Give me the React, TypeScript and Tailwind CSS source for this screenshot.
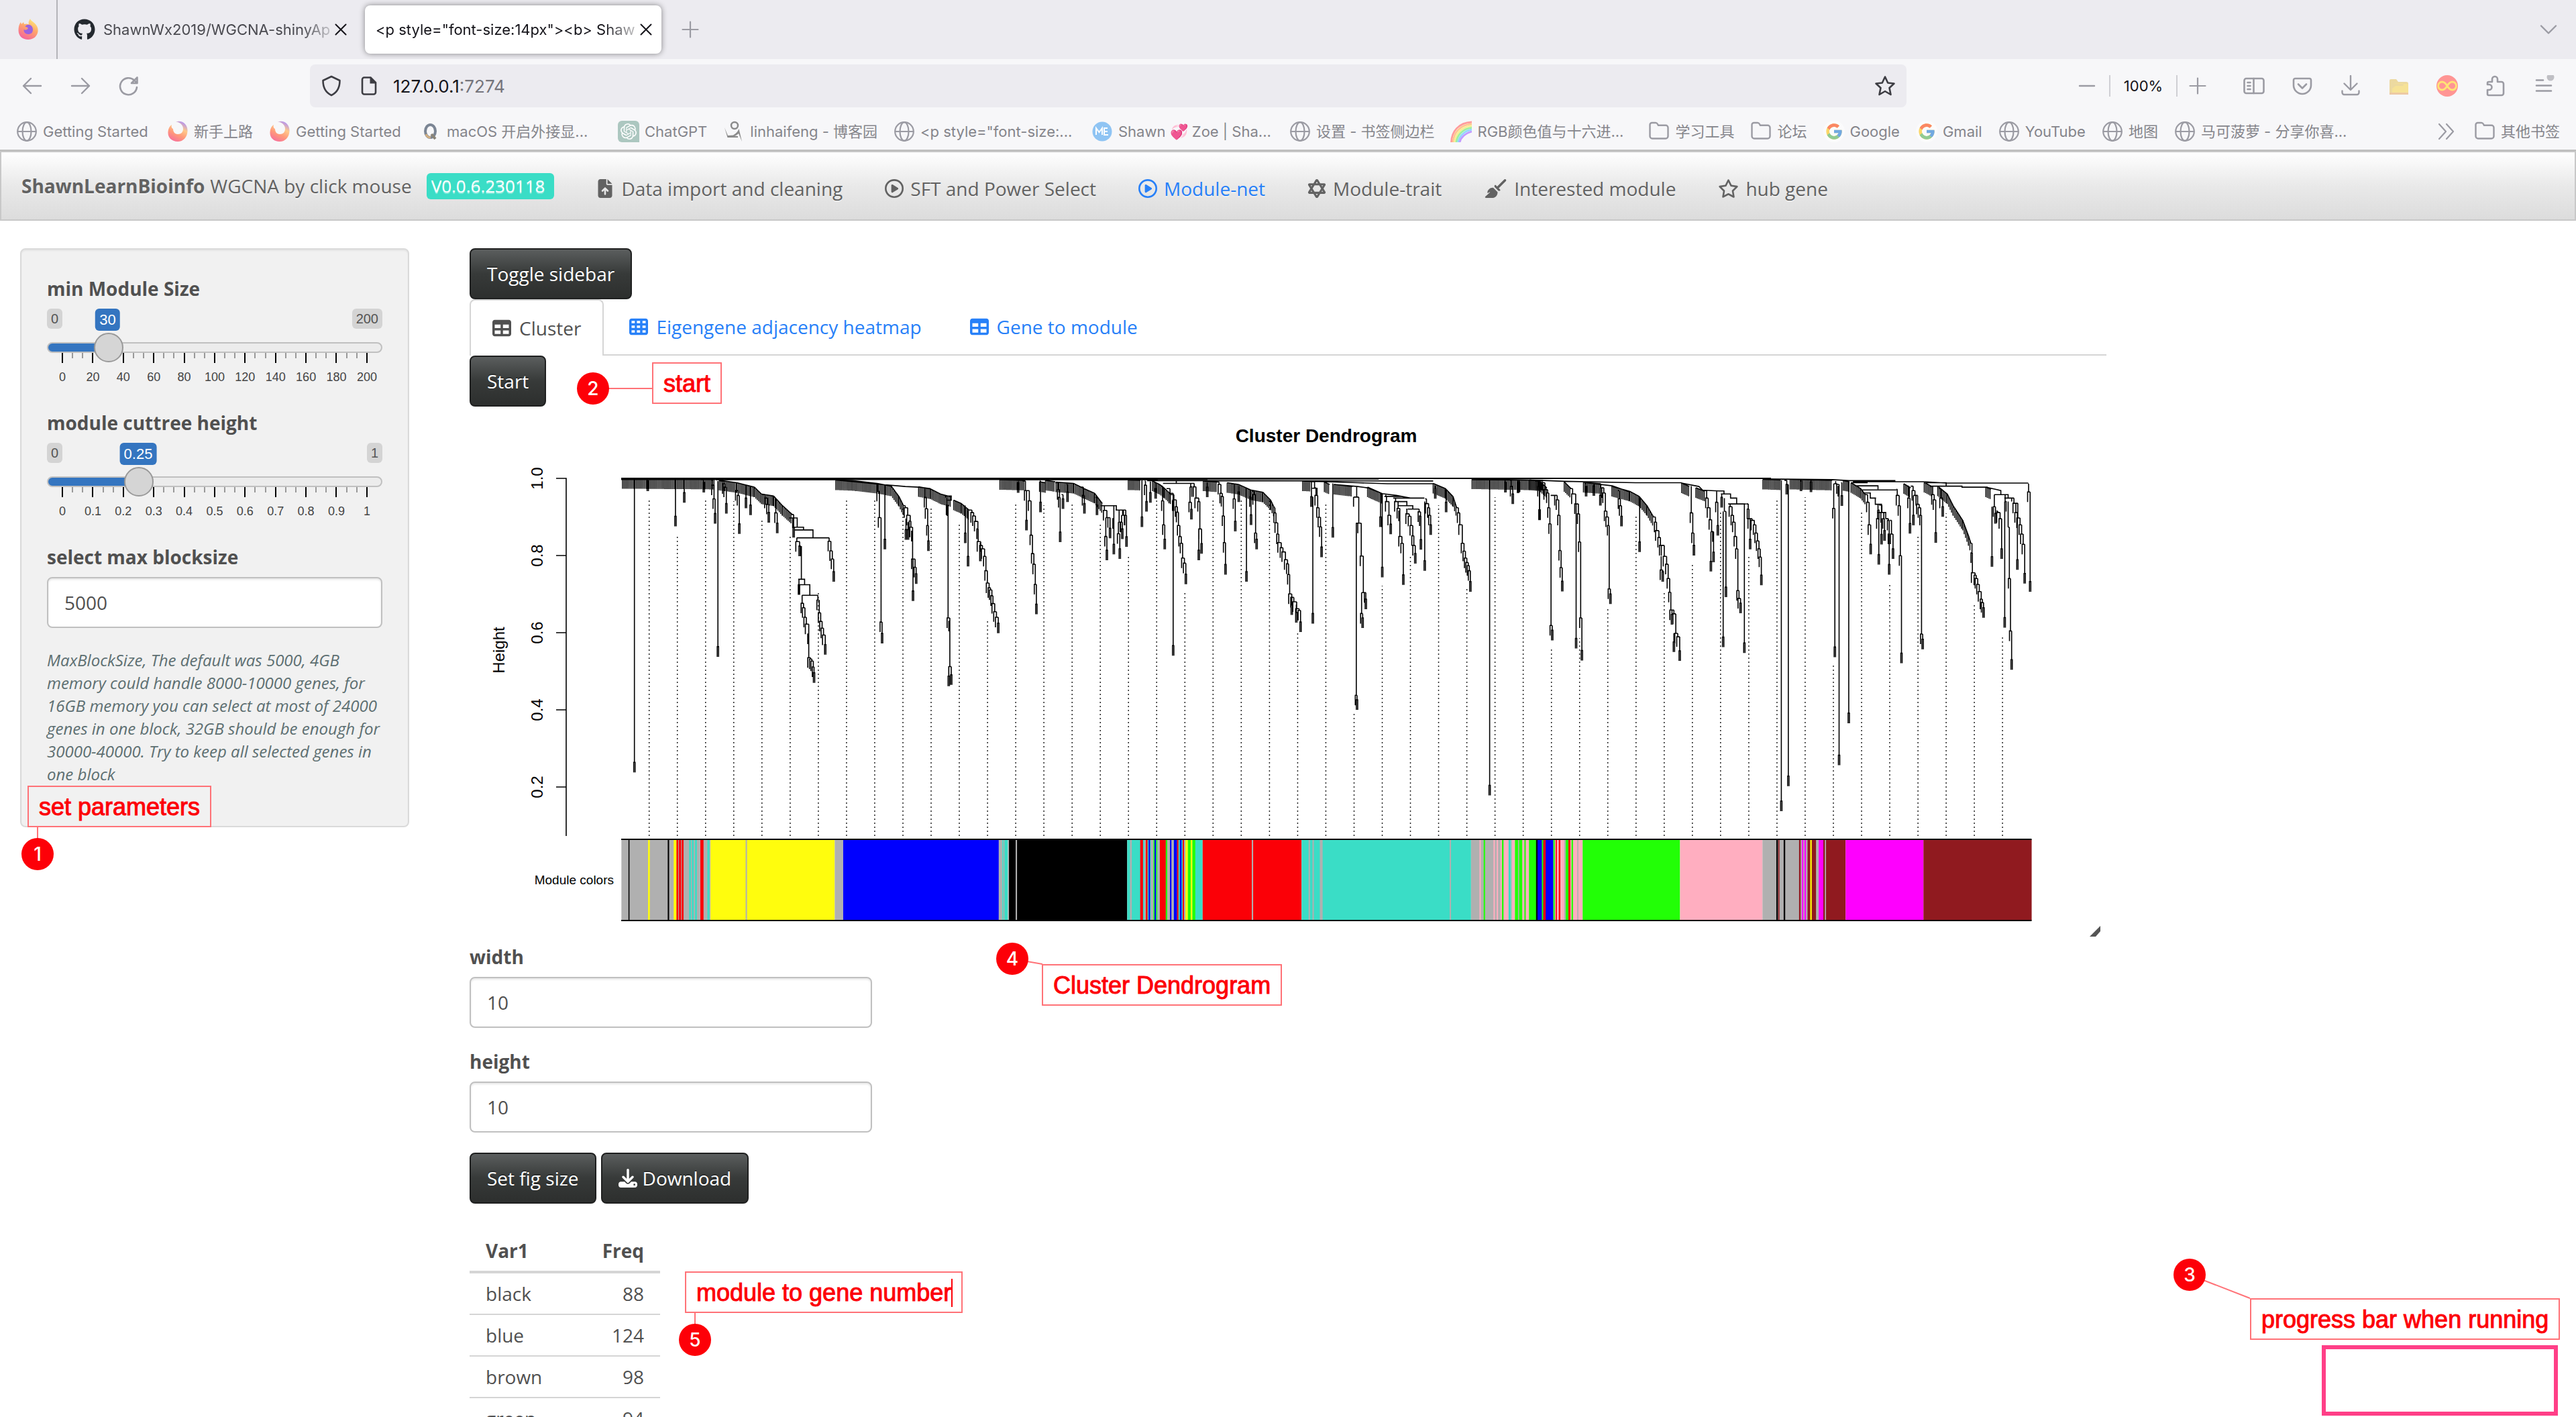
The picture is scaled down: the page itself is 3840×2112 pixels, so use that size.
import { useId, useState, type ReactNode } from "react";
import { FaBroom, FaDownload, FaFileArrowUp, FaGithub, FaRegCirclePlay, FaRegStar, FaStarOfDavid, FaTable, FaTableCells } from "react-icons/fa6";
import { FcGoogle } from "react-icons/fc";
import { SiOpenai } from "react-icons/si";

/* ---------- browser icons ---------- */

function Stroke({ d, className = "size-8", w = 2.4, children }: { d?: string; className?: string; w?: number; children?: ReactNode }) {
  return (
    <svg viewBox="0 0 32 32" className={`${className} shrink-0`} fill="none" stroke="currentColor" strokeWidth={w} strokeLinecap="round" strokeLinejoin="round" aria-hidden="true">
      {d && <path d={d} />}
      {children}
    </svg>
  );
}

const Globe = () => (
  <Stroke className="size-8 text-[#9b9ba3]" w={2.2}>
    <circle cx="16" cy="16" r="13.8" />
    <ellipse cx="16" cy="16" rx="6.5" ry="13.8" />
    <path d="M2.5 16h27" />
  </Stroke>
);

const Folder = () => (
  <Stroke className="size-8 text-[#9b9ba3]" w={2.4} d="M2.5 6a3 3 0 0 1 3-3h5.5c1.5 0 2.2.6 3 2l1 1.800H26a3.500 3.500 0 0 1 3.500 3.500V23a3.500 3.500 0 0 1-3.500 3.500H6A3.500 3.500 0 0 1 2.500 23z" />
);

function Swirl() {
  const id = useId();
  return (
    <svg viewBox="0 0 32 32" className="size-8 shrink-0" aria-hidden="true">
      <defs>
        <linearGradient id={id} x1="0.8" y1="0" x2="0.3" y2="1">
          <stop offset="0" stopColor="#a98bff" />
          <stop offset="0.35" stopColor="#ffc98a" />
          <stop offset="0.65" stopColor="#ff9a7a" />
          <stop offset="1" stopColor="#f7709a" />
        </linearGradient>
      </defs>
      <path fill={`url(#${id})`} d="M13 1.500c10-3 18 4 17.500 14C30 25 24 31 16 31 7 31 1 25 1.500 17 2 11 4 8 7 6c-1 3 0 5 2 6 0 5 3 8 7 8 5 0 8-3 8-8 0-6-5-10-11-10.500z" />
    </svg>
  );
}

function FirefoxLogo() {
  const id = useId();
  return (
    <svg viewBox="0 0 32 32" className="size-8" aria-hidden="true">
      <defs>
        <linearGradient id={id} x1="0.8" y1="0" x2="0.3" y2="1">
          <stop offset="0" stopColor="#fff07a" />
          <stop offset="0.45" stopColor="#ffa76a" />
          <stop offset="1" stopColor="#f5619c" />
        </linearGradient>
      </defs>
      <path fill={`url(#${id})`} d="M19 0c1 3 4 4 7 7 4 4 5 8 4.500 12C29.500 26 24 31 16 31S1.500 26 1.500 17c0-5 1-9 3.500-12l1 3 3-3 1 3c3-1 5-.5 7 .5-1-3 0-6 2-8.500z" />
      <path fill="#9a62e0" d="M15 9c4-1 8 2 8 7s-3 7-7 7-7-3-6.500-7c2 1 4 1 6-1 1-2-2-3-4-3 1-2 2-3 3.500-3z" />
    </svg>
  );
}

const QIcon = () => (
  <svg viewBox="0 0 32 32" className="size-8 shrink-0" fill="none" aria-hidden="true">
    <ellipse cx="15.500" cy="15.500" rx="7.500" ry="9.500" stroke="#7b8594" strokeWidth="4" />
    <path d="M17 20l6 7" stroke="#8a8478" strokeWidth="4" />
    <path d="M9 20c1 3 4 5 7 5" stroke="#d3b083" strokeWidth="3" />
  </svg>
);

const ChatIcon = () => (
  <span className="flex size-8 shrink-0 items-center justify-center rounded-[6px] rounded-br-none bg-[#acc7c0] text-white">
    <SiOpenai className="size-6" />
  </span>
);

const RunnerIcon = () => (
  <svg viewBox="0 0 32 32" className="size-8 shrink-0" aria-hidden="true">
    <circle cx="17" cy="7" r="5" fill="none" stroke="#8b8b8b" strokeWidth="2.500" />
    <path fill="#8b8b8b" d="M2 10l5 12 8-.5c5-3 7-6 8.500-9.500L28 31l-5-12c-2 2-4 3-6 3.500l5 .5v2H6.500z" />
  </svg>
);

const MeIcon = () => (
  <svg viewBox="0 0 32 32" className="size-8 shrink-0" aria-hidden="true">
    <circle cx="16" cy="16" r="14.500" fill="#8fc4f3" />
    <path d="M7 21V11l4.500 6 4.500-6v10M24 11h-5v10h6M19 16h5" fill="none" stroke="#fff" strokeWidth="2" />
  </svg>
);

const RainbowIcon = () => (
  <svg viewBox="0 0 32 32" className="size-8 shrink-0" fill="none" strokeWidth="2.800" aria-hidden="true">
    <path d="M1.500 32C2 16 12 3 32 2" stroke="#ff9c9c" />
    <path d="M4 32C5 18 14 6 32 4.800" stroke="#ffc68f" />
    <path d="M6.500 32C8 20 16 9 32 7.600" stroke="#f7ee93" />
    <path d="M9 32C10 22 18 12 32 10.400" stroke="#9df0a0" />
    <path d="M11.500 32C13 24 20 15 32 13.200" stroke="#93d6ff" />
    <path d="M14 32C15 26 22 18 32 16" stroke="#c29bff" />
  </svg>
);

const GIcon = () => (
  <span className="flex size-8 shrink-0 items-center justify-center rounded-full bg-white opacity-60">
    <FcGoogle className="size-7" />
  </span>
);

const bookmarks: { icon: ReactNode; text: string; width?: string }[] = [
  { icon: <Globe />, text: "Getting Started", width: "w-[161px]" },
  { icon: <Swirl />, text: "新手上路" },
  { icon: <Swirl />, text: "Getting Started", width: "w-[161px]" },
  { icon: <QIcon />, text: "macOS 开启外接显...", width: "w-[231px]" },
  { icon: <ChatIcon />, text: "ChatGPT" },
  { icon: <RunnerIcon />, text: "linhaifeng - 博客园" },
  { icon: <Globe />, text: '<p style="font-size:...', width: "w-[231px]" },
  { icon: <MeIcon />, text: "Shawn 💞 Zoe | Sha...", width: "w-[231px]" },
  { icon: <Globe />, text: "设置 - 书签侧边栏" },
  { icon: <RainbowIcon />, text: "RGB颜色值与十六进...", width: "w-[231px]" },
  { icon: <Folder />, text: "学习工具" },
  { icon: <Folder />, text: "论坛" },
  { icon: <GIcon />, text: "Google" },
  { icon: <GIcon />, text: "Gmail" },
  { icon: <Globe />, text: "YouTube" },
  { icon: <Globe />, text: "地图" },
  { icon: <Globe />, text: "马可菠萝 - 分享你喜..." },
];

function ToolButton({ label, children }: { label: string; children: ReactNode }) {
  return (
    <button type="button" aria-label={label} className="flex h-16 w-[72px] shrink-0 items-center justify-center">
      {children}
    </button>
  );
}

function BrowserChrome() {
  return (
    <header className="shrink-0 border-b-2 border-[#bdbdbd] bg-[#f7f7f9] font-['Inter','Noto_Sans_CJK_SC',sans-serif] text-[22px]">
      <div className="flex h-[88px] items-center bg-[#ecebf0]">
        <button type="button" aria-label="Firefox" className="flex h-full w-[86px] items-center justify-center border-r-2 border-[#b4b4b9]">
          <FirefoxLogo />
        </button>
        <div className="ml-2 flex h-[72px] w-[442px] items-center pr-[15px] pl-4">
          <FaGithub className="size-8 shrink-0 text-[#24292f]" />
          <span className="ml-3 whitespace-nowrap text-[#4a4a50] [mask-image:linear-gradient(to_right,black_88%,transparent_104%)]">ShawnWx2019/WGCNA-shinyAp</span>
          <button type="button" aria-label="Close tab" className="ml-auto text-[#15141a]">
            <Stroke className="size-8" w={2} d="M8.500 8.500l15 15M23.500 8.500l-15 15" />
          </button>
        </div>
        <div className="ml-2 flex h-[72px] w-[442px] items-center rounded-lg bg-white pr-4 pl-4 shadow-[0_0_8px_rgba(0,0,0,0.45)]">
          <span className="whitespace-nowrap text-[#15141a] [mask-image:linear-gradient(to_right,black_88%,transparent_104%)]">{'<p style="font-size:14px"><b> Shaw'}</span>
          <button type="button" aria-label="Close tab" className="ml-auto text-[#15141a]">
            <Stroke className="size-8" w={2} d="M8.500 8.500l15 15M23.500 8.500l-15 15" />
          </button>
        </div>
        <button type="button" aria-label="New tab" className="ml-[27px] text-[#9b9ba3]">
          <Stroke d="M16 4.500v23M4.500 16h23" w={2.200} />
        </button>
        <button type="button" aria-label="List all tabs" className="mr-[25px] ml-auto text-[#9b9ba3]">
          <Stroke d="M5 10.500l11 11 11-11" />
        </button>
      </div>

      <div className="flex h-20 items-center px-3 text-[#9b9ba3]">
        <ToolButton label="Back"><Stroke d="M29 16H3M14 5L3 16l11 11" /></ToolButton>
        <ToolButton label="Forward"><Stroke d="M3 16h26M18 5l11 11-11 11" /></ToolButton>
        <ToolButton label="Reload">
          <Stroke w={2.600} d="M28 18A12.500 12.500 0 1 1 24 7.500l2.500 2.500M28.500 3.500V12H20z" />
        </ToolButton>
        <div className="ml-[234px] flex h-16 flex-1 items-center rounded-lg bg-[#ecebf0] px-4 text-[#3d3d43]">
          <Stroke w={2.600} d="M16 2L3.500 8c0 11 4 18 12.500 22 8.500-4 12.500-11 12.500-22z" />
          <svg viewBox="0 0 32 32" className="ml-6 size-8 shrink-0" aria-hidden="true">
            <path d="M9 3.500h9.500L26 11v14.500a3 3 0 0 1-3 3H9a3 3 0 0 1-3-3v-19a3 3 0 0 1 3-3z" fill="none" stroke="currentColor" strokeWidth="2.600" />
            <path d="M17.500 3v9.500H27z" fill="currentColor" />
          </svg>
          <button type="button" className="ml-5 flex-1 pt-0.5 text-left text-[26px] text-[#15141a]">
            127.0.0.1<span className="text-[#75757c]">:7274</span>
          </button>
          <button type="button" aria-label="Bookmark this page">
            <Stroke w={2.600} d="M16 2.500l4.200 9 9.300 1-7 6.500 2 10L16 24l-8.500 5 2-10-7-6.500 9.300-1z" />
          </button>
        </div>
        <div className="ml-[236px] flex items-center">
          <button type="button" aria-label="Zoom out" className="flex w-[66px] justify-center"><Stroke d="M5 16h22" /></button>
          <span className="flex h-8 w-[102px] items-center justify-center border-x-2 border-[#cfcfd4] text-[#15141a]">100%</span>
          <button type="button" aria-label="Zoom in" className="mr-[18px] flex w-[60px] justify-center"><Stroke d="M4.500 16h23M16 4.500v23" w={2.200} /></button>
        </div>
        <ToolButton label="Sidebar">
          <Stroke w={2.600}><rect x="1.500" y="5" width="29" height="22" rx="3" /><path d="M15.500 5v22M6.500 11h4M6.500 16h4M6.500 21h4" /></Stroke>
        </ToolButton>
        <ToolButton label="Pocket"><Stroke w={2.600} d="M5.500 5h21a2.500 2.500 0 0 1 2.500 2.500V15a13 13 0 0 1-26 0V7.500A2.500 2.500 0 0 1 5.500 5zM10 13.500l6 6 6-6" /></ToolButton>
        <ToolButton label="Downloads"><Stroke d="M16 1v20M6.500 12.500L16 22l9.500-9.500M3.500 23.500V26a3 3 0 0 0 3 3h19a3 3 0 0 0 3-3v-2.500" /></ToolButton>
        <ToolButton label="Tab folder">
          <svg viewBox="0 0 32 32" className="size-8" aria-hidden="true">
            <path d="M2 8a2 2 0 0 1 2-2h8l3 4h12a3 3 0 0 1 3 3v14H2z" fill="#ecd9a0" />
            <path d="M8 12h14a3 3 0 0 1 0 4H11l-5 4v8h24V13z" fill="#f6e296" />
            <path d="M2 26h28v3H2z" fill="#edc9a4" />
          </svg>
        </ToolButton>
        <ToolButton label="Infinity">
          <svg viewBox="0 0 32 32" className="size-8" aria-hidden="true">
            <circle cx="16" cy="16" r="16" fill="#ff9594" />
            <path d="M16 16c-3-5-5-6-7.500-6a6 6 0 0 0 0 12c2.500 0 4.500-1 7.500-6s5-6 7.500-6a6 6 0 0 1 0 12c-2.500 0-4.500-1-7.500-6z" fill="none" stroke="#ffe375" strokeWidth="2.800" />
          </svg>
        </ToolButton>
        <ToolButton label="Extensions"><Stroke w={2.600} d="M11 10V6a4 4 0 0 1 8 0v4h6a3 3 0 0 1 3 3v14a3 3 0 0 1-3 3H6a2 2 0 0 1-2-2v-6h2.500a4 4 0 0 0 0-8H4v-2a2 2 0 0 1 2-2z" /></ToolButton>
        <ToolButton label="Menu">
          <Stroke w={2.600}><path d="M5 7.500h10M5 15.500h22M5 23.500h22" /><circle cx="26" cy="3" r="5.500" fill="#bfbfc4" stroke="none" /></Stroke>
        </ToolButton>
      </div>

      <nav aria-label="Bookmarks" className="flex h-[55px] items-center gap-6 pr-6 pl-6 text-[#85858b]">
        {bookmarks.map((b, i) => (
          <a key={i} href="#bookmark" className="flex shrink-0 items-center gap-2 whitespace-nowrap">
            {b.icon}
            <span className={b.width}>{b.text}</span>
          </a>
        ))}
        <button type="button" aria-label="More bookmarks" className="ml-auto text-[#9b9ba3]">
          <Stroke d="M4 5l10 11L4 27M15 5l10 11-10 11" w={2.200} />
        </button>
        <a href="#other" className="flex shrink-0 items-center gap-2 whitespace-nowrap">
          <Folder />
          其他书签
        </a>
      </nav>
    </header>
  );
}

/* ---------- application bar ---------- */

const pages = [
  { icon: <FaFileArrowUp className="size-7" />, text: "Data import and cleaning" },
  { icon: <FaRegCirclePlay className="size-7" />, text: "SFT and Power Select" },
  { icon: <FaRegCirclePlay className="size-7" />, text: "Module-net", active: true },
  { icon: <FaStarOfDavid className="size-7" />, text: "Module-trait" },
  { icon: <FaBroom className="h-7 w-[35px]" />, text: "Interested module" },
  { icon: <FaRegStar className="h-7 w-[31px]" />, text: "hub gene" },
];

function AppBar() {
  return (
    <nav className="flex h-[104px] shrink-0 items-center border-2 border-[#c8c8c8] bg-linear-to-b from-white via-[#e9e9e9] to-[#dcdcdc] pl-[30px] text-[#626262] [text-shadow:0_2px_0_rgba(255,255,255,0.4)]">
      <div className="flex shrink-0 items-center whitespace-nowrap">
        <b>ShawnLearnBioinfo</b>
        <span className="ml-2">WGCNA by click mouse</span>
        <span className="ml-[22px] rounded-md bg-[#3addc6] pr-[14px] pl-[7px] text-[26px] leading-[39px] text-white">V0.0.6.230118</span>
      </div>
      <ul className="ml-[62px] flex items-center gap-[63px] pt-2">
        {pages.map((p) => (
          <li key={p.text}>
            <a href="#page" className={`flex items-center gap-2.5 whitespace-nowrap ${p.active ? "text-[#2780f8]" : ""}`}>
              {p.icon}
              {p.text}
            </a>
          </li>
        ))}
      </ul>
    </nav>
  );
}

/* ---------- form parts ---------- */

function SliderField({ label, max, value, step, ticks }: { label: string; max: number; value: number; step: number; ticks: string[] }) {
  const id = useId();
  const [v, setV] = useState(value);
  const at = `calc(22px + (100% - 44px) * ${v / max})`;
  return (
    <div className="mb-9">
      <label htmlFor={id} className="block font-bold">{label}</label>
      <div className="relative mt-2.5 flex h-8 items-start justify-between font-['Liberation_Sans',sans-serif] text-[20px] leading-[30px] text-[#555]">
        <span className="rounded-md bg-[#d4d4d4] px-1.5">0</span>
        <span className="rounded-md bg-[#d4d4d4] px-1.5">{max}</span>
        <output htmlFor={id} style={{ left: at }} className="absolute top-0 -translate-x-1/2 rounded-md bg-[#3475c0] px-1.5 text-[22px] leading-[33px] text-white">{v}</output>
      </div>
      <input
        id={id}
        type="range"
        min={0}
        max={max}
        step={step}
        value={v}
        onChange={(e) => setV(Number(e.target.value))}
        style={{ backgroundImage: `linear-gradient(#3475c0, #3475c0)`, backgroundSize: `${(22 + 456 * (v / max)) / 5}% 100%` }}
        className="relative z-10 mt-[18px] block h-4 w-full appearance-none rounded-full border-2 border-[#c0c0c0] bg-[#ececec] bg-no-repeat bg-origin-border [&::-webkit-slider-thumb]:size-11 [&::-webkit-slider-thumb]:appearance-none [&::-webkit-slider-thumb]:rounded-full [&::-webkit-slider-thumb]:border-2 [&::-webkit-slider-thumb]:border-[#999] [&::-webkit-slider-thumb]:bg-[#d5d5d5]"
      />
      <div aria-hidden="true" className="flex h-[15px] justify-between px-[22px]">
        {Array.from({ length: 31 }, (_, i) => (
          <span key={i} className={i % 3 === 0 ? "h-[15px] w-0.5 bg-black" : "h-2 w-0.5 bg-[#999]"} />
        ))}
      </div>
      <div aria-hidden="true" className="mt-[9px] flex h-6 justify-between px-[23px] font-['Liberation_Sans',sans-serif] text-[18px] leading-6 text-[#444]">
        {ticks.map((t) => (
          <span key={t} className="flex w-0 justify-center">{t}</span>
        ))}
      </div>
    </div>
  );
}

function TextField({ label, initial, className = "" }: { label: string; initial: string; className?: string }) {
  const id = useId();
  return (
    <div className={className}>
      <label htmlFor={id} className="block font-bold">{label}</label>
      <input id={id} defaultValue={initial} className="mt-2.5 block h-[76px] w-full rounded-lg border-2 border-[#c0c0c0] bg-white px-6 shadow-[inset_0_2px_3px_rgba(0,0,0,0.1)]" />
    </div>
  );
}

function DarkButton({ children }: { children: ReactNode }) {
  return (
    <button type="button" className="flex h-[76px] items-center gap-2 rounded-lg border-2 border-[#1f2020] bg-linear-to-b from-[#5b5e5e] via-[#373a39] to-[#2d2f2e] px-6 whitespace-nowrap text-white [text-shadow:0_-2px_0_rgba(0,0,0,0.3)]">
      {children}
    </button>
  );
}

function Sidebar() {
  return (
    <aside className="w-[580px] shrink-0 rounded-lg border-2 border-[#dadada] bg-[#f1f1f1] px-[38px] pt-[38px] pb-[60px] shadow-[inset_0_2px_2px_rgba(0,0,0,0.05)]">
      <SliderField label="min Module Size" max={200} value={30} step={1} ticks={["0", "20", "40", "60", "80", "100", "120", "140", "160", "180", "200"]} />
      <SliderField label="module cuttree height" max={1} value={0.25} step={0.01} ticks={["0", "0.1", "0.2", "0.3", "0.4", "0.5", "0.6", "0.7", "0.8", "0.9", "1"]} />
      <TextField label="select max blocksize" initial="5000" />
      <p className="mt-[31px] text-[24px] leading-[34px] text-[#5d6f71] italic">
        MaxBlockSize, The default was 5000, 4GB memory could handle 8000-10000 genes, for 16GB memory you can select at most of 24000 genes in one block, 32GB should be enough for 30000-40000. Try to keep all selected genes in one block
      </p>
    </aside>
  );
}

/* ---------- dendrogram ---------- */

type Band = {
  x0: number;
  k: number;
  /* comb: dense leaves hanging from a descending curve */
  combs: string[];
  /* chain: successive merges, ending in a pair of leaves */
  chains: string[];
  /* stem: single drop ending in a pair of leaves: x, top, bottom */
  stems: string;
  lines: string[];
};

const bands: Band[] = [
  {
    x0: 680,
    k: 1.912,
    combs: [
      "474,183 735,185", "750,188 800,195 850,208 870,228 905,234 930,262 958,288",
      "1082,187 1130,189 1200,197 1240,205 1262,235 1275,262", "1318,207 1352,213 1380,228 1410,236", "1418,246 1440,256 1462,275",
    ],
    chains: [
      "543,186 546,190", "649,186 650,224", "700,186 706,194", "728,188 731,202 735,242 738,285", "752,190 762,198 766,208 770,256", "798,195 799,218 804,232 807,315",
      "826,204 826,240", "838,206 839,260", "872,230 882,240 888,258 891,282", "908,240 911,283 915,313", "955,288 962,298 962,326",
      "971,356 971,367 979,380", "984,477 977,493", "986,524 986,547 990,560 994,588 998,608 1005,637 1005,706 1010,710 1014,716 1018,733 1020,750",
      "1031,524 1031,538 1035,575 1039,600 1043,620 1047,640 1052,668", "1063,356 1063,366 1068,394 1072,418 1076,455",
      "1202,198 1202,220 1206,297 1211,602 1214,635", "1275,262 1280,268 1287,290 1294,307 1296,325 1301,337 1301,418 1308,442 1311,461",
      "1282,300 1282,332", "1288,310 1288,332", "1332,210 1337,238 1340,271 1344,320 1346,365", "1400,238 1400,260 1402,262 1402,590 1407,600 1407,732 1411,756",
      "1450,262 1451,342", "1462,275 1470,282 1475,292 1480,308 1487,330 1488,367 1495,378 1500,388 1506,410 1510,452 1514,488 1519,502 1523,508 1527,525 1530,548 1535,572 1540,588 1545,605",
      "1492,372 1494,395",
    ],
    stems: "508,184,1012 625,184,293 746,190,674 1222,202,360 1302,418,511 1459,275,410 1404,732,760",
    lines: [
      "M949,298H972V325M962,325H990V333M963,333H1017V356M971,356H1063M984,380V477M975,477H993V493M977,493V522M977,493H1008V524M986,524H1031",
      "M1082,187L1200,199L1280,206L1320,208L1352,212", "M740,186H1082", "M1395,238V234H1411V246H1398",
    ],
  },
  {
    x0: 1480,
    k: 1.912,
    combs: [
      "20,186 92,188", "150,188 178,192", "133,192 150,195", "180,193 230,197 260,212 290,226 312,256", "386,187 420,188", "455,190 475,200 490,212 508,230",
      "600,190 640,193", "668,195 700,200 735,216 770,223 792,246 802,268", "883,190 905,191", "945,193 960,200", "973,200 1025,206", "1068,208 1112,228", "1255,197 1290,212 1312,236 1322,268",
      "1366,184 1568,188",
    ],
    chains: [
      "70,188 72,195", "85,190 93,218 96,305", "96,218 104,248 109,348 113,402 117,433 121,492 124,550", "134,190 136,252", "178,195 187,215 190,238 192,339", "196,230 200,242", "210,200 213,222", "250,208 258,232 261,256",
      "292,238 297,260", "310,262 318,276 325,297 322,352 325,392", "327,297 334,328", "343,262 345,300 345,375", "350,275 360,310 358,344 362,388", "360,275 372,290 367,310 369,330", "372,275 379,290 381,353",
      "433,190 435,202 438,250", "448,192 449,224", "462,195 464,212", "478,205 484,248 487,318 490,360", "495,212 505,226 514,248", "508,230 516,245 523,265 526,281 529,320 533,352 537,372 541,415 546,430 550,462",
      "557,197 564,207 562,252 566,273", "568,197 574,207 579,240 587,250 590,330 595,373", "610,195 611,208", "640,193 645,200 650,226 654,235 657,292 660,370 663,434", "680,198 688,242 691,308", "700,205 701,222",
      "732,216 735,236 736,289", "740,220 744,230 749,342 752,360", "802,268 804,283 807,312 812,345 815,370 822,385 827,397 834,420 840,432 843,463 846,520 852,530 858,543 866,563 873,568 877,602",
      "852,530 852,552", "864,552 865,574", "912,192 908,236", "915,210 921,232 926,268 930,296 934,324 937,383", "1043,237 1043,313 1050,409 1056,516 1051,577 1054,590", "1056,516 1063,535", "1035,313 1036,816 1038,829",
      "1110,228 1105,295", "1116,235 1122,250 1129,290 1134,316", "1143,240 1148,250 1155,270 1160,278 1160,352 1166,372 1170,464", "1178,272 1180,286 1187,293 1192,320 1197,350 1200,378 1204,402",
      "1213,272 1215,280 1219,292 1220,361", "1232,242 1236,256 1242,268 1245,290 1248,318", "1322,268 1327,283 1331,318 1338,372 1343,395 1347,415 1351,428 1355,437 1358,452 1361,484",
      "1260,205 1261,212", "1291,215 1292,252", "1460,188 1461,194", "1474,188 1478,206 1482,228", "1495,188 1497,196", "1546,190 1556,206 1558,275",
    ],
    stems: "425,188,295 514,248,671 587,330,392 723,210,455 912,236,577 969,197,326 1110,228,442 1231,250,423 1416,185,1079 1500,186,193",
    lines: [
      "M0,184H1100", "M20,186H470", "M440,189H600L1255,190", "M485,197H568M523,190V197", "M308,262H352V275H370V288", "M770,223V224", "M883,190L1040,195L1125,198H1255", "M905,192H917V210M910,211H924V232",
      "M972,200L1040,206L1068,210L1110,227L1150,232L1190,240H1230", "M1037,206V237M1028,237V265M1028,237H1043M1035,313H1050M1120,228V235H1165M1141,240H1230M1145,250H1180V262H1197V272M1155,262H1180M1182,272H1213",
      "M1366,186L1568,188",
    ],
  },
  {
    x0: 2280,
    k: 1.742,
    combs: [
      "0,187 25,190 45,210", "90,192 108,212", "140,194 185,198", "214,206 260,220 285,235 305,262 322,295", "395,196 415,206", "432,210 455,220", "606,185 652,187", "677,185 786,188", "815,189 830,192", "835,195 860,212 872,230",
      "972,198 990,210", "1025,194 1045,206", "1060,205 1085,228 1100,262 1125,305 1140,350 1146,372", "1185,208 1198,214",
    ],
    chains: [
      "30,195 40,215 47,225 50,268 53,315 56,612 59,626", "55,232 68,232 72,245 76,290 79,393 82,443 85,483", "105,212 112,228 120,257 127,286 130,368 133,590 136,685", "145,198 147,206", "165,198 167,204",
      "180,200 185,210 184,232", "188,210 193,225 197,278 201,295 205,320 207,505 210,520", "230,218 233,242 236,262 239,293", "322,295 327,310 330,335 336,355 340,378 345,378 350,410 356,433 360,475 364,515 367,567 375,578 380,635 385,645 390,686",
      "343,410 342,450 346,455", "376,635 375,660", "368,567 370,580", "420,205 420,283 424,342 427,378", "450,218 460,240 464,268 469,303 473,338 471,425", "473,338 478,398", "486,218 486,252 489,320", "497,228 499,238",
      "506,279 510,500", "516,257 521,265 526,290 530,310 534,352 538,388 541,510 544,533 548,547", "563,257 568,272 570,300 573,360", "572,300 578,305 584,318 588,342 592,365 596,388 599,412 602,465",
      "662,188 668,200", "795,190 795,198 790,270 793,675", "799,200 804,206 804,991", "809,195 811,233", "872,230 878,252 882,318 886,375", "898,258 905,275 904,300 907,405", "908,260 915,282 920,300 922,335",
      "915,300 914,346", "925,300 932,305 934,345 934,434", "936,305 940,345 944,388", "953,214 955,232 960,262 963,408 966,693", "980,205 985,240 988,314", "990,205 996,218 1001,232 997,290", "1003,232 1008,258 1012,268 1016,290 1018,637 1021,652",
      "1040,206 1047,230 1051,245 1055,341", "1062,212 1068,240 1073,265", "1146,372 1149,400 1150,458 1157,465 1160,475 1164,492 1168,513 1173,535 1176,545 1179,560", "1207,230 1207,265 1210,285", "1212,278 1216,282 1222,300 1226,388",
      "1243,230 1235,250 1234,589", "1250,240 1258,255 1263,282 1267,420", "1262,255 1268,298 1274,318 1278,345 1282,375 1286,460", "1243,325 1246,475 1249,628 1252,712", "1295,198 1296,222 1300,484",
    ],
    stems: "26,190,274 121,257,650 286,238,368 503,279,646 558,257,663 654,188,1125 672,200,1052 829,192,868 1201,265,411 705,186,190 731,186,193",
    lines: [
      "M0,182H606", "M25,188L90,191L275,195H395", "M140,194L215,204L260,222", "M395,196L440,206L450,217L492,219H505V228H522V240H538V257H562M516,257H538M506,240V279M497,228H510",
      "M606,184L785,186L830,189H950M840,192L1025,192L1082,196H1295", "M835,195H878M848,204H905V214M860,216H953M866,225H885V240H898V258H914V282H925V300M886,240H900M905,282H925", "M1030,195H1082V206M1042,205H1123V208H1190M1185,208L1210,214L1224,218V230H1207M1224,230H1243V240M1233,240H1252V250M1243,250V325",
    ],
  },
];

function bandPath(b: Band) {
  const X = (x: number) => Math.round((b.x0 + x / b.k) * 10) / 10;
  const Y = (y: number) => Math.round((620 + y / 1.96) * 10) / 10;
  const pts = (s: string) => s.split(" ").map((p) => p.split(",").map(Number));
  const leaf = 15;
  let thin = "";
  let teeth = "";
  for (const c of b.combs) {
    const p = pts(c);
    for (let i = 0; i + 1 < p.length; i++) {
      const [xa, ya, xb, yb] = [X(p[i][0]), Y(p[i][1]), X(p[i + 1][0]), Y(p[i + 1][1])];
      thin += `M${xa},${ya}L${xb},${yb}`;
      for (let x = xa; x <= xb; x += 2.1) {
        const y = ya + ((yb - ya) * (x - xa)) / (xb - xa);
        teeth += `M${x.toFixed(1)},${y.toFixed(1)}v${leaf}`;
      }
    }
  }
  const pair = (x: number, y: number) => `M${x - 1},${y + leaf}V${y}H${x + 1}V${y + leaf}`;
  for (const c of b.chains) {
    const p = pts(c).map(([x, y]) => [X(x), Y(y)]);
    const n = p.length;
    for (let i = 0; i + 1 < n; i++) {
      const [x, y] = p[i];
      const [nx, ny] = p[i + 1];
      if (i > 0) {
        const side = nx >= x ? -1.5 : 1.5;
        thin += `M${x + side},${y + leaf}V${y}H${nx}`;
      } else {
        thin += `M${x},${y}H${nx}`;
      }
      thin += `M${nx},${y}V${ny}`;
    }
    thin += pair(p[n - 1][0], p[n - 1][1]);
  }
  for (const [x, a, z] of pts(b.stems)) thin += `M${X(x)},${Y(a)}V${Y(z)}` + pair(X(x), Y(z));
  for (const l of b.lines) {
    thin += l.replace(/([MLHV])([\d.]+)(?:,([\d.]+))?/g, (_, c: string, m: string, n?: string) =>
      n !== undefined ? `${c}${X(+m)},${Y(+n)}` : c === "H" ? `H${X(+m)}` : `V${Y(+m)}`,
    );
  }
  return { thin, teeth };
}

/* top of every dotted guide, left to right */
const guideTops = [
  746, 800, 746, 747, 776, 800, 884, 746, 746, 755, 757, 782, 922, 752, 753, 748, 782, 830, 746, 884, 746, 746, 746, 944, 752, 1064, 873, 830, 753, 878, 741, 746,
  968, 951, 908, 770, 884, 842, 764, 830, 746, 741, 992, 764, 872, 796, 765, 902, 950,
];

const GREY = "#b0b0b0", TEAL = "#3addc6", RED = "#fb0007", BLUE = "#0000fe", GREEN = "#22ff06", PINK = "#ffaec0", YELLOW = "#fffd0d", BROWN = "#901a1f", MAGENTA = "#fe00fe", BLACK = "#000";

/* module colour bar: start and end in plot pixels, then the colour */
const A = (x: number) => 680 + x / 1.912;
const B = (x: number) => 1480 + x / 1.912;
const C = (x: number) => 2280 + x / 1.742;
const bar: [number, number, string][] = [
  [A(471), A(725), GREY], [A(491), A(494), BLACK], [A(547), A(552), YELLOW], [A(603), A(607), BLACK], [A(620), A(628), YELLOW],
  [A(628), A(633), RED], [A(635), A(641), RED], [A(643), A(648), RED], [A(664), A(669), TEAL], [A(672), A(677), TEAL], [A(681), A(686), TEAL],
  [A(696), A(705), RED], [A(716), A(722), TEAL], [A(725), A(1079), YELLOW], [A(825), A(829), GREY], [A(1079), A(1103), GREY], [A(1103), B(17), BLUE],
  [B(17), B(27), GREY], [B(27), B(43), TEAL], [B(30), B(33), GREY], [B(43), B(46), GREY], [B(46), B(383), BLACK], [B(65), B(69), GREY],
  [B(383), B(598), TEAL], [B(391), B(396), GREY], [B(420), B(428), RED], [B(432), B(436), GREY], [B(436), B(441), RED], [B(444), B(448), BLUE], [B(450), B(458), GREY],
  [B(458), B(461), GREEN], [B(461), B(465), BLUE], [B(466), B(469), GREEN], [B(469), B(476), GREY], [B(476), B(493), RED], [B(493), B(497), GREEN],
  [B(497), B(516), GREY], [B(505), B(509), BLUE], [B(516), B(525), BLUE], [B(525), B(529), RED], [B(533), B(538), BLUE], [B(541), B(545), RED],
  [B(545), B(549), GREY], [B(549), B(556), YELLOW], [B(556), B(564), GREEN], [B(564), B(569), YELLOW], [B(569), B(577), GREEN], [B(598), B(880), RED], [B(738), B(742), GREY],
  [B(880), B(1363), TEAL], [B(900), B(904), GREY], [B(911), B(915), GREY], [B(932), B(940), GREY], [B(1302), B(1306), GREY], [B(1363), B(1470), GREY],
  [B(1387), B(1391), PINK], [B(1399), B(1403), GREEN], [B(1427), B(1431), PINK], [B(1436), B(1440), PINK], [B(1447), B(1451), PINK], [B(1451), B(1456), GREEN],
  [B(1456), B(1470), PINK], [B(1470), B(1477), TEAL], [B(1477), B(1480), GREY], [B(1480), B(1488), PINK], [B(1488), B(1549), GREEN], [B(1497), B(1500), GREY],
  [B(1509), B(1515), PINK], [B(1519), B(1528), PINK], [B(1549), B(1552), BLACK], [B(1552), B(1564), BLUE], [B(1564), C(4), GREEN],
  [C(4), C(17), GREEN], [C(17), C(21), BLACK], [C(21), C(62), BLUE], [C(32), C(36), GREEN], [C(36), C(42), RED], [C(62), C(66), GREEN],
  [C(66), C(138), PINK], [C(68), C(71), RED], [C(76), C(80), RED], [C(90), C(94), GREY], [C(94), C(101), GREEN], [C(101), C(106), RED], [C(109), C(113), GREEN], [C(124), C(127), GREY],
  [C(138), C(391), GREEN], [C(391), C(605), PINK], [C(605), C(770), GREY], [C(641), C(645), BLACK], [C(646), C(649), BROWN], [C(660), C(664), BLACK],
  [C(700), C(704), BROWN], [C(707), C(711), MAGENTA], [C(714), C(718), MAGENTA], [C(722), C(744), BROWN], [C(729), C(733), YELLOW], [C(751), C(763), MAGENTA], [C(763), C(767), BROWN],
  [C(770), C(821), BROWN], [C(821), C(1023), MAGENTA], [C(1023), C(1304), BROWN],
];

function Dendrogram() {
  return (
    <svg viewBox="700 606 2440 800" className="block w-full" role="img" aria-label="Cluster Dendrogram" fontFamily="'Liberation Sans', Arial, sans-serif">
      <text x="1977" y="659" fontSize="28" fontWeight="bold" textAnchor="middle">Cluster Dendrogram</text>
      <g fontSize="24" textAnchor="middle">
        <text transform="translate(752 969) rotate(-90)">Height</text>
        {["1.0", "0.8", "0.6", "0.4", "0.2"].map((t, i) => (
          <text key={t} transform={`translate(809 ${713 + i * 115}) rotate(-90)`}>{t}</text>
        ))}
      </g>
      <path d="M829,713H844V1246M829,828h15M829,943h15M829,1058h15M829,1173h15" fill="none" stroke="#000" strokeWidth="1.600" />
      {guideTops.map((top, i) => (
        <path key={i} d={`M${(967.7 + 42.03 * i).toFixed(1)},1246V${top}`} stroke="#222" strokeWidth="1.500" strokeDasharray="2 4" />
      ))}
      <path d="M926,713H2640" stroke="#000" strokeWidth="2" />
      <path d="M926,714H1800" stroke="#000" strokeWidth="3" />
      {bands.map((b) => {
        const p = bandPath(b);
        return (
          <g key={b.x0} fill="none" stroke="#000">
            <path d={p.teeth} strokeWidth="1.400" />
            <path d={p.thin} strokeWidth="1.600" />
          </g>
        );
      })}
      {bar.map(([a, z, c], i) => (
        <rect key={i} x={a} y="1251" width={z - a} height="121" fill={c} />
      ))}
      <path d="M926,1251H3028.500M926,1372H3028.500" stroke="#000" strokeWidth="2" />
      <text x="915" y="1318" fontSize="19" textAnchor="end">Module colors</text>
      <path d="M3115,1396L3131,1380V1388L3124,1396z" fill="#555" />
    </svg>
  );
}

/* ---------- main column ---------- */

const frequencies: [string, number][] = [["black", 88], ["blue", 124], ["brown", 98], ["green", 94]];

function Main() {
  return (
    <main className="max-w-[2440px] flex-1">
      <div className="flex"><DarkButton>Toggle sidebar</DarkButton></div>
      <div role="tablist" className="flex h-[84px] gap-1 border-b-2 border-[#d5d5d5]">
        <button type="button" role="tab" aria-selected="true" className="-mb-0.5 flex h-[84px] items-center gap-3 rounded-t-lg border-2 border-b-0 border-[#d5d5d5] bg-white px-8">
          <FaTable className="size-7" />Cluster
        </button>
        <button type="button" role="tab" aria-selected="false" className="flex items-center gap-3 px-[34px] text-[#2780f8]">
          <FaTableCells className="size-7" />Eigengene adjacency heatmap
        </button>
        <button type="button" role="tab" aria-selected="false" className="flex items-center gap-3 px-[34px] text-[#2780f8]">
          <FaTable className="size-7" />Gene to module
        </button>
      </div>
      <div className="flex"><DarkButton>Start</DarkButton></div>
      <Dendrogram />
      <TextField label="width" initial="10" className="w-[600px]" />
      <TextField label="height" initial="10" className="mt-[30px] w-[600px]" />
      <div className="mt-[30px] flex gap-[7px]">
        <DarkButton>Set fig size</DarkButton>
        <DarkButton><FaDownload className="size-7" />Download</DarkButton>
      </div>
      <table className="mt-10 w-[284px] border-separate border-spacing-0">
        <thead>
          <tr>
            <th scope="col" className="border-b-4 border-[#d5d5d5] px-6 py-2.5 text-left">Var1</th>
            <th scope="col" className="border-b-4 border-[#d5d5d5] px-6 py-2.5 text-right">Freq</th>
          </tr>
        </thead>
        <tbody>
          {frequencies.map(([name, n]) => (
            <tr key={name}>
              <td className="border-b-2 border-[#d5d5d5] px-6 py-2.5">{name}</td>
              <td className="border-b-2 border-[#d5d5d5] px-6 py-2.5 text-right">{n}</td>
            </tr>
          ))}
        </tbody>
      </table>
    </main>
  );
}

/* ---------- numbered callouts drawn over the page ---------- */

const callouts = [
  { n: 1, text: "set parameters", left: 41, top: 1171, cx: 56, cy: 1273, to: [56, 1233] },
  { n: 2, text: "start", left: 972, top: 540, cx: 884, cy: 579, to: [972, 579] },
  { n: 3, text: "progress bar when running", left: 3354, top: 1935, cx: 3264, cy: 1900, to: [3354, 1935] },
  { n: 4, text: "Cluster Dendrogram", left: 1553, top: 1437, cx: 1509, cy: 1429, to: [1554, 1437] },
  { n: 5, text: "module to gene number", left: 1021, top: 1895, cx: 1036, cy: 1997, to: [1036, 1957] },
];

function Callouts() {
  return (
    <div className="pointer-events-none absolute inset-0 z-20 font-['Liberation_Sans',sans-serif] text-[#fd0008]">
      <svg className="absolute inset-0 size-full" aria-hidden="true">
        {callouts.map((c) => (
          <line key={c.n} x1={c.cx} y1={c.cy} x2={c.to[0]} y2={c.to[1]} stroke="#ff7277" strokeWidth="2" />
        ))}
      </svg>
      {callouts.map((c) => (
        <div key={c.n}>
          <span style={{ left: c.cx, top: c.cy }} className="absolute flex size-12 -translate-1/2 items-center justify-center rounded-full bg-[#fd0008] font-['Inter',sans-serif] text-[28px] font-medium text-white">{c.n}</span>
          <span style={{ left: c.left, top: c.top }} className="absolute flex h-[62px] items-center border-2 border-[#ff7277] px-[15px] pt-0.5 text-[36px] whitespace-nowrap [-webkit-text-stroke:1px_#fd0008]">
            {c.text}
            {c.n === 5 && <span className="-mr-0.5 h-[42px] w-0.5 bg-[#fd0008]" />}
          </span>
        </div>
      ))}
      <div className="absolute top-[2005px] left-[3461px] h-[105px] w-[352px] border-[6px] border-[#ff3f87]" />
    </div>
  );
}

export default function App() {
  return (
    <div className="relative flex h-screen flex-col overflow-hidden bg-white font-['Open_Sans',sans-serif] text-[28px] leading-10 text-[#505050]">
      <BrowserChrome />
      <AppBar />
      <div className="flex items-start gap-[90px] px-[30px] pt-[41px]">
        <Sidebar />
        <Main />
      </div>
      <Callouts />
    </div>
  );
}
